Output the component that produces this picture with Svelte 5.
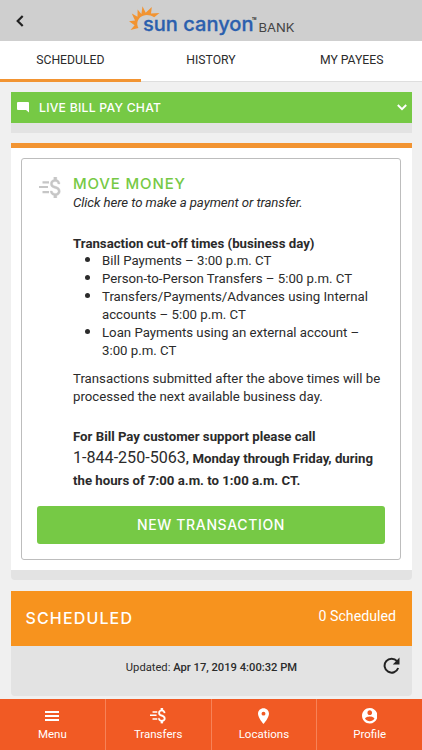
<script>
  const tabs = ['SCHEDULED', 'HISTORY', 'MY PAYEES'];
  const nav = ['Menu', 'Transfers', 'Locations', 'Profile'];
</script>

{#snippet money()}
  <svg class="money" viewBox="0 0 22 21" fill="currentColor">
    <path d="M3.500 4.300h6.500v2.200H3.500zM0 8.900h9v2.200H0zM3.500 14h6.500v2.200H3.500z" />
    <path stroke="currentColor" stroke-width=".3" transform="translate(4.8 -3.5) scale(1 1.167)" d="M11.8 10.9c-2.27-.59-3-1.2-3-2.15 0-1.09 1.01-1.85 2.7-1.85 1.78 0 2.44.85 2.5 2.1h2.21c-.07-1.72-1.12-3.3-3.21-3.81V3h-3v2.16c-1.94.42-3.5 1.68-3.5 3.61 0 2.31 1.91 3.46 4.7 4.13 2.5.6 3 1.48 3 2.41 0 .69-.49 1.79-2.7 1.79-2.06 0-2.87-.92-2.98-2.1h-2.2c.12 2.19 1.76 3.42 3.68 3.83V21h3v-2.15c1.95-.37 3.5-1.5 3.5-3.55 0-2.84-2.43-3.81-4.7-4.4z" />
  </svg>
{/snippet}

<div class="screen">
  <header>
    <svg class="back" viewBox="0 0 8 12"><path d="M6.700 1 1.700 6l5 5" fill="none" stroke="#222" stroke-width="2.200" /></svg>
    <svg class="logo" viewBox="0 0 170 41">
      <path fill="#f29432" d="M9.500 28 1.500 30 5.600 25.300 0 21.300l6-.7L2.800 13.500l5.700 3.300L8.600 9.500l3.800 4.600L13.500 6.200l3.200 6.500L22.800 7l-.8 6.400 8.500-.4-5.300 4.200C20 14 14.500 14.300 11 17.500c-3 3-3.500 7-1.500 10.500z" />
      <text x="14" y="31" font-family="Inter, sans-serif" font-size="19.500" font-weight="500" fill="#2b5fae" stroke="#2b5fae" stroke-width=".3" textLength="110.500" lengthAdjust="spacingAndGlyphs">sun canyon</text>
      <text x="123" y="20" font-family="Roboto, sans-serif" font-size="3" font-weight="700" fill="#222">TM</text>
      <text x="129.500" y="32" font-family="Inter, sans-serif" font-size="12" fill="#444" textLength="36" lengthAdjust="spacingAndGlyphs">BANK</text>
    </svg>
  </header>
  <div class="tabs">
    {#each tabs as tab, i}
      <div class="tab" class:active={i === 0}>{tab}</div>
    {/each}
  </div>

  <main>
    <section class="chat">
      <div class="chatbar">
        <svg class="bubble" viewBox="0 0 12 12"><path fill="#fff" d="M1 1h10q1 0 1 1v9.600L9 9H1Q0 9 0 8V2Q0 1 1 1z" /></svg>
        <span>LIVE BILL PAY CHAT</span>
        <svg class="down" viewBox="0 0 10 7"><path d="m.8 1 4.200 4.200L9.200 1" fill="none" stroke="#fff" stroke-width="1.900" /></svg>
      </div>
    </section>

    <section class="move">
      <div class="box">
        <div class="info">
          <div class="icon">{@render money()}</div>
          <div class="copy">
            <h2>MOVE MONEY</h2>
            <p class="hint">Click here to make a payment or transfer.</p>
            <p class="cut">Transaction cut-off times (business day)</p>
            <ul>
              <li>Bill Payments – 3:00 p.m. CT</li>
              <li>Person-to-Person Transfers – 5:00 p.m. CT</li>
              <li>Transfers/Payments/Advances using Internal<br />accounts – 5:00 p.m. CT</li>
              <li>Loan Payments using an external account –<br />3:00 p.m. CT</li>
            </ul>
            <p class="after">Transactions submitted after the above times will be<br />processed the next available business day.</p>
            <p class="support">For Bill Pay customer support please call<br /><span class="phone">1-844-250-5063</span>, Monday through Friday, during<br />the hours of 7:00 a.m. to 1:00 a.m. CT.</p>
          </div>
        </div>
        <div class="button"><span>NEW TRANSACTION</span></div>
      </div>
    </section>

    <section class="sched">
      <div class="head"><h3>SCHEDULED</h3><span class="count">0 Scheduled</span></div>
      <div class="updated">
        <div class="stamp">Updated: <b>Apr 17, 2019 4:00:32 PM</b></div>
        <svg class="refresh" viewBox="0 0 17 17"><path d="M14 4.200A7 7 0 1 0 15.200 11" fill="none" stroke="#222" stroke-width="2" /><path d="M16.500.5V7.500H9.800z" fill="#222" /></svg>
      </div>
    </section>
  </main>

  <nav>
    {#each nav as item}
      <div class="item">
        <div class="glyph">
          {#if item === 'Menu'}
            <svg width="14" height="10" viewBox="0 0 14 10"><path d="M0 0h14v1.900H0zM0 4h14v1.900H0zM0 8h14v1.900H0z" fill="#fff" /></svg>
          {:else if item === 'Transfers'}
            {@render money()}
          {:else if item === 'Locations'}
            <svg width="11" height="16" viewBox="5 2 14 20"><path fill="#fff" d="M12 2C8.130 2 5 5.130 5 9c0 5.250 7 13 7 13s7-7.750 7-13c0-3.870-3.130-7-7-7zm0 9.500a2.500 2.500 0 0 1 0-5 2.500 2.500 0 0 1 0 5z" /></svg>
          {:else}
            <svg width="15.500" height="15.500" viewBox="2 2 20 20"><path fill="#fff" d="M12 2C6.480 2 2 6.480 2 12s4.480 10 10 10 10-4.480 10-10S17.520 2 12 2zm0 3c1.660 0 3 1.340 3 3s-1.340 3-3 3-3-1.340-3-3 1.340-3 3-3zm0 14.200c-2.500 0-4.710-1.280-6-3.220.03-1.990 4-3.080 6-3.080 1.990 0 5.970 1.090 6 3.080-1.290 1.940-3.500 3.220-6 3.220z" /></svg>
          {/if}
        </div>
        <span>{item}</span>
      </div>
    {/each}
  </nav>
</div>

<style>
  :global(body) { margin: 0; overflow: hidden; }
  .screen { width: 422px; height: 750px; display: flex; flex-direction: column; background: #f0f0f0; color: #2b2b2b; font: 13.220px/18px Roboto, sans-serif; overflow: hidden; }
  h2, h3, p, ul { margin: 0; padding: 0; }
  svg { display: block; flex: none; }
  header { height: 41px; flex: none; background: #cfcfcf; display: flex; align-items: center; padding-left: 16px; box-sizing: border-box; }
  .back { width: 8px; height: 12px; }
  .logo { width: 170px; height: 41px; margin-left: 105px; }
  .tabs { height: 41px; flex: none; display: flex; background: #fff; }
  .tab { flex: 1; display: flex; align-items: center; justify-content: center; font-size: 12.200px; border-bottom: 1px solid #dedede; padding-bottom: 3px; box-sizing: border-box; }
  .active { border-bottom: 3px solid #f29432; padding-bottom: 1px; }
  main { flex: 1; min-height: 0; overflow: hidden; padding: 10px 10.500px 0; box-sizing: border-box; }
  .chat { border-bottom: 10px solid #e3e3e3; }
  .chatbar { height: 30.500px; box-sizing: border-box; background: #76c945; color: #fff; display: flex; align-items: center; padding: 0 5px 0 6px; font: 500 12.200px Inter, sans-serif; letter-spacing: .25px; }
  .chatbar span { flex: 1; margin-left: 10.500px; }
  .bubble { width: 12px; height: 12px; }
  .down { width: 10px; height: 7px; }
  .move { margin-top: 10.500px; height: 437px; box-sizing: border-box; border-top: 5px solid #f29432; border-bottom: 10px solid #e3e3e3; border-radius: 0 0 4px 4px; background: #fff; padding: 10px 10.500px 0; }
  .box { height: 402px; box-sizing: border-box; border: 1px solid #bdbdbd; border-radius: 3px; padding: 0 15px; }
  .info { display: flex; height: 347px; }
  .icon { width: 36px; padding: 18px 0 0 2px; box-sizing: border-box; color: #c6c6c6; }
  .money { width: 22px; height: 21px; }
  .copy { white-space: nowrap; padding-top: 14.500px; }
  h2 { color: #76c945; font: 500 15px/20px Inter, sans-serif; letter-spacing: .85px; }
  .hint { font-style: italic; letter-spacing: -.090px; }
  .cut { font-weight: 700; margin-top: 23px; }
  ul { padding-left: 29px; margin-top: -1.500px; }
  li::marker { font-size: 16px; }
  li { height: 18px; }
  li:nth-child(n + 3) { height: 36px; }
  .after { margin-top: 11px; line-height: 17.500px; }
  .support { font-weight: 700; margin-top: 20.500px; line-height: 21.500px; }
  .phone { font-size: 16.100px; font-weight: 400; }
  .button { height: 38px; border-radius: 3px; background: #76c945; color: #fff; display: flex; align-items: center; justify-content: center; font: 500 14px/36px Inter, sans-serif; letter-spacing: .65px; padding-bottom: 1px; box-sizing: border-box; }
  .sched { margin-top: 10.500px; }
  .head { height: 55px; background: #f7931e; color: #fff; display: flex; justify-content: space-between; padding: 0 15.500px 0 15px; }
  h3 { font: 500 16px/54px Inter, sans-serif; letter-spacing: 1.150px; }
  .count { font-size: 14.200px; line-height: 50px; }
  .updated { height: 50.500px; background: #e3e3e3; border-radius: 0 0 4px 4px; display: flex; padding: 0 12px 0 30px; }
  .stamp { flex: 1; text-align: center; font-size: 11.200px; line-height: 43px; }
  .stamp b { font-weight: 500; }
  .refresh { width: 17px; height: 17px; margin-top: 11px; }
  nav { height: 51.500px; flex: none; background: #f15a24; display: flex; color: #fff; }
  .item { flex: 1; display: flex; flex-direction: column; align-items: center; font-size: 11.500px; line-height: 16px; border-left: 1px solid #f78257; box-sizing: border-box; }
  .item:first-child { border-left: 0; }
  .glyph { height: 35px; margin-bottom: -8px; display: flex; align-items: center; }
  .glyph .money { width: 16px; height: 15.300px; }
</style>
